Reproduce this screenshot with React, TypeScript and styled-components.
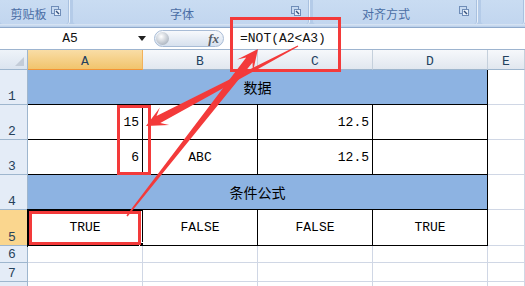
import * as React from 'react';
import styled, { createGlobalStyle, css } from 'styled-components';

const GlobalStyle = createGlobalStyle`
  html, body {
    margin: 0;
    padding: 0;
    background: #ffffff;
    overflow: hidden;
  }
`;

const MONO = `'Liberation Mono', 'DejaVu Sans Mono', 'Noto Sans CJK SC', monospace`;
const CJK = `'Noto Sans CJK SC', 'Noto Sans', sans-serif`;
const RED = '#f33a3a';

const Page = styled.div`
  position: relative;
  width: 525px;
  height: 286px;
  overflow: hidden;
  background: #ffffff;
`;

/* ribbon */

const Ribbon = styled.div`
  display: flex;
  gap: 3px;
  height: 24px;
  background: #b4cbe8;
`;

const Group = styled.div<{ $w?: number; $lead?: number }>`
  display: flex;
  align-items: center;
  ${p => (p.$w ? `width: ${p.$w}px;` : 'flex: 1;')}
  padding-left: ${p => p.$lead ?? 0}px;
  box-sizing: border-box;
  background: linear-gradient(#c9dcf2, #c2d6ef);
  border-right: 1px solid #e9f1fa;
  box-shadow: inset -1px 0 0 #a9c1df;
  border-bottom-right-radius: 3px;
  border-bottom-left-radius: 3px;
`;

const GroupLabel = styled.span`
  flex: 1;
  text-align: center;
  font-family: ${CJK};
  font-size: 12px;
  color: #4a6ea5;
  line-height: 24px;
  padding-top: 3px;
`;

const Launcher = styled.span`
  display: flex;
  width: 12px;
  margin-right: 6px;
  margin-bottom: 2px;
`;

const Band = styled.div`
  height: 4px;
  background: linear-gradient(#dbe7f5, #b7cde9);
  border-bottom: 1px solid #8fa9cb;
  box-sizing: border-box;
`;

/* formula bar */

const FormulaBar = styled.div`
  display: flex;
  align-items: center;
  height: 22px;
  background: #ffffff;
  border-bottom: 1px solid #9db4cf;
  box-sizing: border-box;
`;

const NameBox = styled.div`
  display: flex;
  align-items: center;
  width: 152px;
  font-family: ${MONO};
  font-size: 13px;
  color: #111;
`;

const NameText = styled.span`
  flex: 1;
  text-align: center;
  padding-left: 2px;
`;

const DropArrow = styled.span`
  width: 0;
  height: 0;
  margin-right: 6px;
  border-left: 4px solid transparent;
  border-right: 4px solid transparent;
  border-top: 5px solid #222;
`;

const FxPill = styled.div`
  position: relative;
  display: flex;
  align-items: center;
  justify-content: flex-end;
  width: 70px;
  height: 17px;
  margin-left: 2px;
  padding-right: 4px;
  box-sizing: border-box;
  border: 1px solid #a8bcd6;
  border-radius: 9px;
  background: linear-gradient(#f7f9fc, #d7e1ee);
`;

const Ball = styled.span`
  position: absolute;
  left: 1px;
  top: 1px;
  width: 13px;
  height: 13px;
  border-radius: 50%;
  background: radial-gradient(circle at 40% 35%, #ffffff, #b9c1cb 65%, #8e98a6);
`;

const Fx = styled.span`
  font-family: 'Liberation Serif', serif;
  font-style: italic;
  font-weight: bold;
  font-size: 13px;
  color: #555c66;
`;

const Formula = styled.div`
  padding-left: 16px;
  font-family: ${MONO};
  font-size: 13px;
  color: #111;
`;

/* sheet */

const Sheet = styled.div`
  display: grid;
  grid-template-columns: 28px repeat(4, 115px) 1fr;
  grid-template-rows: 20px 35px 35px 35px 35px 36px 17px 19px 18px;
`;

const Corner = styled.div`
  position: relative;
  background: linear-gradient(#eef3f9, #dbe4ef);
  border-right: 1px solid #9eb6ce;
  border-bottom: 1px solid #9eb6ce;
  box-sizing: border-box;

  &::after {
    content: '';
    position: absolute;
    right: 3px;
    bottom: 3px;
    border-left: 9px solid transparent;
    border-bottom: 9px solid #c3ccd8;
  }
`;

const ColHead = styled.div<{ $active?: boolean }>`
  display: flex;
  align-items: center;
  justify-content: center;
  padding-top: 4px;
  box-sizing: border-box;
  font-family: ${MONO};
  font-size: 13px;
  color: #23415f;
  border-right: 1px solid #c5d0dc;
  border-bottom: 1px solid #9eb6ce;
  background: linear-gradient(#f6f8fb, #e1e7ef);

  ${p =>
    p.$active &&
    css`
      background: linear-gradient(#f9dda6, #f1c46c);
      border-bottom: 1px solid #f29436;
      border-right-color: #f2b15a;
    `}
`;

const RowHead = styled.div<{ $active?: boolean }>`
  display: flex;
  align-items: flex-end;
  padding: 0 0 1px 8px;
  box-sizing: border-box;
  font-family: ${MONO};
  font-size: 13px;
  line-height: 12px;
  color: #27425a;
  background: #e4ecf7;
  border-right: 1px solid #9eb6ce;
  border-bottom: 1px solid #9eb6ce;

  ${p =>
    p.$active &&
    css`
      background: #fad68e;
      border-right-color: #f29436;
    `}
`;

const Cell = styled.div<{
  $align?: 'left' | 'center' | 'right';
  $band?: boolean;
  $ruled?: boolean;
  $span?: number;
  $selected?: boolean;
}>`
  position: relative;
  display: flex;
  align-items: center;
  justify-content: ${p =>
    p.$align === 'right' ? 'flex-end' : p.$align === 'center' ? 'center' : 'flex-start'};
  padding: 0 3px;
  box-sizing: border-box;
  font-family: ${MONO};
  font-size: 13px;
  color: #000;
  background: ${p => (p.$band ? '#8db3e2' : '#ffffff')};
  border-right: 1px solid ${p => (p.$ruled ? '#000' : '#d0d7e5')};
  border-bottom: 1px solid ${p => (p.$ruled ? '#000' : '#d0d7e5')};
  ${p => p.$span && `grid-column: span ${p.$span};`}
  ${p => p.$band && `font-family: ${CJK}; font-size: 14px;`}

  ${p =>
    p.$selected &&
    css`
      outline: 2px solid #000;
      outline-offset: -1px;

      &::after {
        content: '';
        position: absolute;
        right: -4px;
        bottom: -4px;
        width: 5px;
        height: 5px;
        background: #000;
        border: 1px solid #fff;
      }
    `}
`;

const Overlay = styled.svg`
  position: absolute;
  left: 0;
  top: 0;
  pointer-events: none;
`;

/* tapered arrow, thin at the tail, thick at the head */
function arrowPoints(tx: number, ty: number, hx: number, hy: number) {
  const dx = hx - tx;
  const dy = hy - ty;
  const len = Math.hypot(dx, dy);
  const ux = dx / len;
  const uy = dy / len;
  const nx = -uy;
  const ny = ux;
  const tail = 0.7;
  const shaft = 4;
  const head = 10;
  const neck = 14;
  const barb = 21;
  const at = (d: number, o: number) =>
    `${(hx - ux * d + nx * o).toFixed(1)},${(hy - uy * d + ny * o).toFixed(1)}`;
  return [
    at(len, tail),
    at(neck, shaft),
    at(barb, head),
    at(0, 0),
    at(barb, -head),
    at(neck, -shaft),
    at(len, -tail),
  ].join(' ');
}

const Launch = () => (
  <svg width="10" height="10" viewBox="0 0 10 10">
    <rect x="0.5" y="0.5" width="7" height="7" fill="none" stroke="#6f8db8" />
    <rect x="3.5" y="3.5" width="6" height="6" fill="#e8f0fa" stroke="#6f8db8" />
    <path d="M5 5 L8 8" stroke="#34507c" strokeWidth="1.4" />
  </svg>
);

const columns = ['A', 'B', 'C', 'D', 'E'];

export default function App() {
  return (
    <Page>
      <GlobalStyle />
      <Ribbon>
        <Group $w={70} $lead={6}>
          <GroupLabel>剪贴板</GroupLabel>
          <Launcher><Launch /></Launcher>
        </Group>
        <Group $w={237}>
          <GroupLabel>字体</GroupLabel>
          <Launcher><Launch /></Launcher>
        </Group>
        <Group $w={165}>
          <GroupLabel>对齐方式</GroupLabel>
          <Launcher><Launch /></Launcher>
        </Group>
        <Group />
      </Ribbon>
      <Band />
      <FormulaBar>
        <NameBox>
          <NameText>A5</NameText>
          <DropArrow />
        </NameBox>
        <FxPill>
          <Ball />
          <Fx>fx</Fx>
        </FxPill>
        <Formula>=NOT(A2&lt;A3)</Formula>
      </FormulaBar>

      <Sheet>
        <Corner />
        {columns.map(c => (
          <ColHead key={c} $active={c === 'A'}>{c}</ColHead>
        ))}

        <RowHead>1</RowHead>
        <Cell $band $ruled $span={4} $align="center">数据</Cell>
        <Cell />

        <RowHead>2</RowHead>
        <Cell $ruled $align="right">15</Cell>
        <Cell $ruled />
        <Cell $ruled $align="right">12.5</Cell>
        <Cell $ruled />
        <Cell />

        <RowHead>3</RowHead>
        <Cell $ruled $align="right">6</Cell>
        <Cell $ruled $align="center">ABC</Cell>
        <Cell $ruled $align="right">12.5</Cell>
        <Cell $ruled />
        <Cell />

        <RowHead>4</RowHead>
        <Cell $band $ruled $span={4} $align="center">条件公式</Cell>
        <Cell />

        <RowHead $active>5</RowHead>
        <Cell $ruled $selected $align="center">TRUE</Cell>
        <Cell $ruled $align="center">FALSE</Cell>
        <Cell $ruled $align="center">FALSE</Cell>
        <Cell $ruled $align="center">TRUE</Cell>
        <Cell />

        {['6', '7', ''].map((r, i) => (
          <React.Fragment key={i}>
            <RowHead>{r}</RowHead>
            <Cell />
            <Cell />
            <Cell />
            <Cell />
            <Cell />
          </React.Fragment>
        ))}
      </Sheet>

      <Overlay width="525" height="286" viewBox="0 0 525 286">
        <g fill="none" stroke={RED} strokeWidth="3">
          <rect x="231.5" y="18.5" width="108" height="52" />
          <rect x="118.5" y="106.5" width="31" height="67" />
          <rect x="30.5" y="212.5" width="109" height="31" />
        </g>
        <g fill={RED}>
          <polygon points={arrowPoints(298, 46, 146, 126)} />
          <polygon points={arrowPoints(127, 216, 258, 49)} />
        </g>
      </Overlay>
    </Page>
  );
}
